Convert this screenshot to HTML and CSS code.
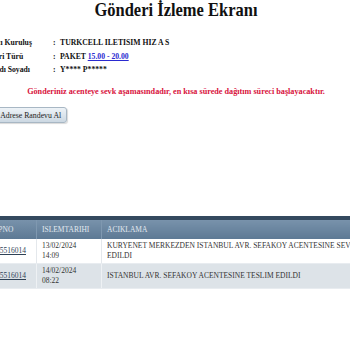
FILE: index.html
```html
<!DOCTYPE html>
<html lang="tr">
<head>
  <meta charset="UTF-8">
  <title>Gönderi İzleme Ekranı</title>
  <link rel="stylesheet" href="styles.css">
</head>
<body>
  <div class="page">
    <h1>Gönderi İzleme Ekranı</h1>

    <table class="info">
      <tr>
        <td class="label">Dağıtıcı Kuruluş</td>
        <td class="colon">:</td>
        <td>TURKCELL ILETISIM HIZ A S</td>
      </tr>
      <tr>
        <td class="label">Gönderi Türü</td>
        <td class="colon">:</td>
        <td>PAKET <a href="#">15.00 - 20.00</a></td>
      </tr>
      <tr>
        <td class="label">Alıcı Adı Soyadı</td>
        <td class="colon">:</td>
        <td>Y**** P*****</td>
      </tr>
    </table>

    <p class="notice">Gönderiniz acenteye sevk aşamasındadır, en kısa sürede dağıtım süreci başlayacaktır.</p>

    <div class="actions">
      <button class="btn">Farklı Adrese Randevu Al</button>
    </div>

    <table class="moves">
      <thead>
        <tr>
          <th class="c-no">TAKIPNO</th>
          <th class="c-date">ISLEMTARIHI</th>
          <th>ACIKLAMA</th>
        </tr>
      </thead>
      <tbody>
        <tr>
          <td><a href="#">273105516014</a></td>
          <td>13/02/2024<br>14:09</td>
          <td>KURYENET MERKEZDEN ISTANBUL AVR. SEFAKOY ACENTESINE SEVK EDILDI</td>
        </tr>
        <tr class="alt">
          <td><a href="#">273105516014</a></td>
          <td>14/02/2024<br>08:22</td>
          <td>ISTANBUL AVR. SEFAKOY ACENTESINE TESLIM EDILDI</td>
        </tr>
      </tbody>
    </table>
  </div>
</body>
</html>
```

FILE: styles.css
```css
html, body {
  margin: 0;
  overflow: hidden;
}

body {
  font-family: "Liberation Serif", "Times New Roman", serif;
  background: #fff;
  color: #111;
}

.page {
  width: 472px;
  margin-left: -60px;
}

h1 {
  margin: 0;
  font-family: "Liberation Serif", serif;
  font-size: 16.5px;
  line-height: 19px;
  text-align: center;
  transform: scaleY(1.12);
}

.info {
  margin: 17px 0 0 37px;
  border-collapse: collapse;
  font-size: 7.7px;
  font-weight: bold;
}

.info td {
  padding: 0;
  height: 13.5px;
}

.info .label {
  width: 76px;
}

.info .colon {
  width: 7px;
}

.info .info-value {
  font-size: 7.5px;
}

.info a {
  color: #2a2ad0;
}

.notice {
  margin: 10px 0 0;
  text-align: center;
  color: #d8123c;
  font-size: 8.2px;
  font-weight: bold;
}

.actions {
  margin: 8px 0 0 34px;
}

.btn {
  font-family: "Liberation Serif", serif;
  font-size: 7.8px;
  color: #222;
  height: 16px;
  padding: 0 5px;
  border: 1px solid #a8b7c4;
  border-radius: 3px;
  background: linear-gradient(#eef3f7, #ccd8e2);
  box-shadow: 1px 1px 1px rgba(0, 0, 0, 0.15);
}

.moves {
  margin: 93px 0 0 36px;
  width: 405px;
  border-collapse: collapse;
  font-size: 7.5px;
  color: #333;
}

.moves th {
  height: 19px;
  padding: 0 5px;
  text-align: left;
  font-weight: normal;
  color: #e2e9f0;
  border-top: 4px solid #34495f;
  border-right: 1px solid #7f98b0;
  background: linear-gradient(#7892ab, #5d7994);
}

.moves .c-no {
  width: 50px;
}

.moves .c-date {
  width: 54px;
}

.moves td {
  padding: 2px 5px;
  height: 19px;
  vertical-align: middle;
  border-right: 1px solid #e4e8ec;
  border-bottom: 1px solid #e8ecf0;
  line-height: 10px;
}

.moves td a {
  color: #2f4256;
}

.moves .alt td {
  background: #dde3e8;
  border-right-color: #eef1f4;
}
```
